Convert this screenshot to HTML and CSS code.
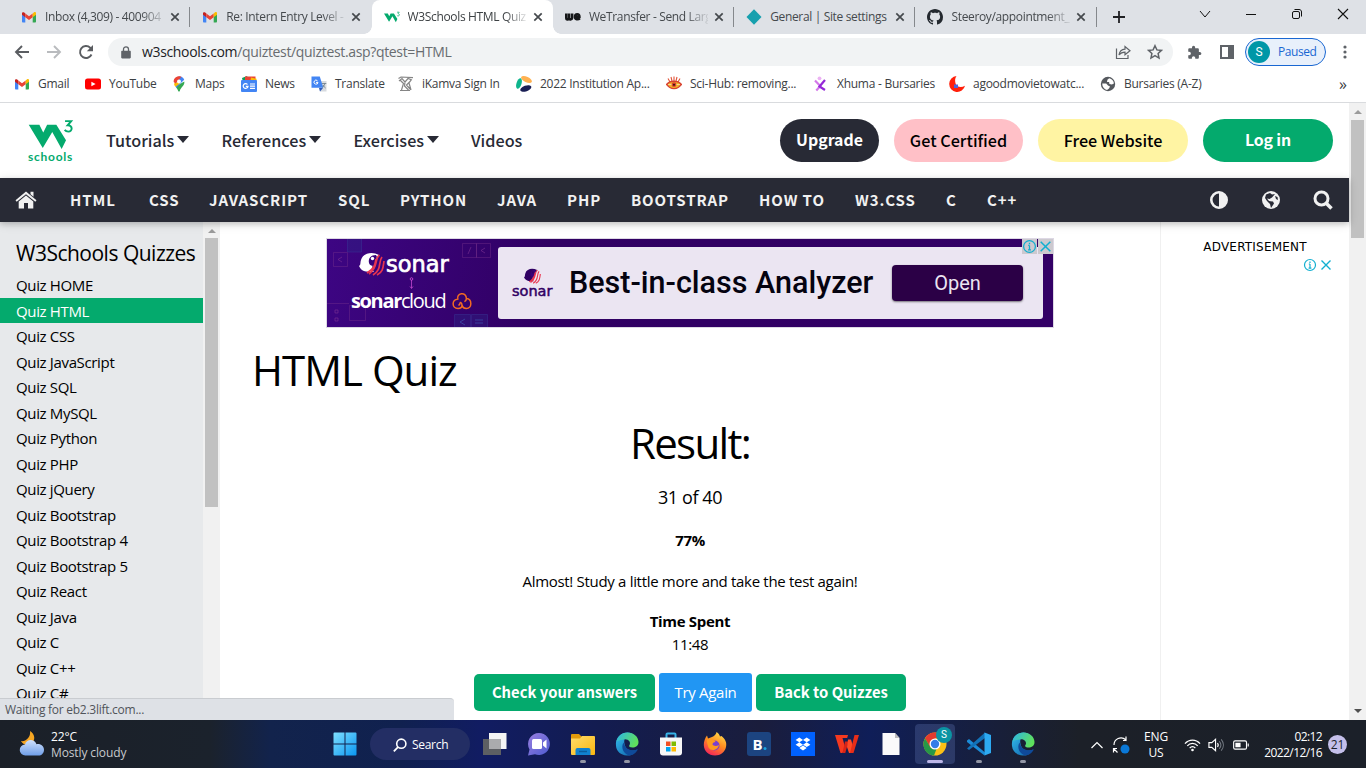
FILE: index.html
```html
<!DOCTYPE html>
<html lang="en">
<head>
<meta charset="utf-8">
<title>W3Schools HTML Quiz</title>
<link rel="stylesheet" href="styles.css">
</head>
<body>
<svg class="defs" aria-hidden="true">
  <defs>
    <linearGradient id="gEdge" x1="0" y1="0" x2="1" y2="1"><stop offset="0" stop-color="#35c1f1"/><stop offset="1" stop-color="#0c59a4"/></linearGradient>
    <linearGradient id="gEdgeTop" x1="0" y1="0" x2="1" y2=".4"><stop offset="0" stop-color="#2bb5ec"/><stop offset="1" stop-color="#5fe05c"/></linearGradient>
    <linearGradient id="gWin" x1="0" y1="0" x2="1" y2="1"><stop offset="0" stop-color="#7fe0ff"/><stop offset="1" stop-color="#0a96f0"/></linearGradient>
    <linearGradient id="gChat" x1="0" y1="0" x2="1" y2="1"><stop offset="0" stop-color="#9a7fe0"/><stop offset="1" stop-color="#4c5bd0"/></linearGradient>
    <linearGradient id="gFox" x1=".8" y1="0" x2=".3" y2="1"><stop offset="0" stop-color="#ffe14d"/><stop offset=".5" stop-color="#ff8a1f"/><stop offset="1" stop-color="#f5245a"/></linearGradient>
    <linearGradient id="gCloud" x1="0" y1="0" x2="0" y2="1"><stop offset="0" stop-color="#cfe0fb"/><stop offset="1" stop-color="#6f9ee8"/></linearGradient>
    <linearGradient id="gFolder" x1="0" y1="0" x2="1" y2="1"><stop offset="0" stop-color="#ffdc6b"/><stop offset="1" stop-color="#fbb60f"/></linearGradient>
  </defs>
  <symbol id="gmail" viewBox="0 0 16 16"><path fill="#4285f4" d="M1 5v7.6c0 .5.4 1 1 1h2.3V7z"/><path fill="#34a853" d="M11.7 7v6.6H14c.6 0 1-.5 1-1V5z"/><path fill="#c5221f" d="M1 4.2v1.6l3.300 2.500V4.500L3.200 3.500C2.300 2.800 1 3.300 1 4.200z"/><path fill="#ea4335" d="M4.300 4.400 8 7.200l3.700-2.800v3.900L8 11.100 4.300 8.300z"/><path fill="#fbbc04" d="M11.700 4.400v3.900L15 5.800V4.200c0-1-1.200-1.500-2.200-.7z"/></symbol>
  <symbol id="x" viewBox="0 0 10 10"><path d="M1.300 1.300l7.400 7.400M8.700 1.300 1.300 8.700" stroke="#45494d" stroke-width="1.700"/></symbol>
  <symbol id="edge" viewBox="0 0 24 24"><path fill="url(#gEdge)" d="M1 14C0 6 6 .5 12.500.5c3 0 5 1 6 2.500C13 1 8 6 9.500 12c1 6 7 8 13 5.500-3 5-7 6.500-11 6C6 23 1.500 19.500 1 14z"/><path fill="url(#gEdgeTop)" d="M1.300 10C2.500 3.500 7.500.5 12.500.5 19 .5 23.500 5 23.500 10c0 4-3 5.500-6 5.500-2.500 0-3.800-1-3.300-2 2.500-3-1-7-5.500-6C5 8 2.500 8.500 1.300 10z"/><path fill="#0f4a9a" d="M8.600 10.500c-3 4.500-.5 11 5.500 13 3.500-.3 6.400-2.200 8.400-5.600.2-.5-.2-.7-.6-.5-5 2.200-11.500.6-13.300-6.900z"/></symbol>
  <symbol id="adinfo" viewBox="0 0 14 14"><circle cx="7" cy="7" r="5.500" fill="none" stroke="#12afd0" stroke-width="1.200"/><path d="M7 6v4.300M7 3.500v1.400M5.800 6H7M5.600 10.200h2.800" stroke="#12afd0" stroke-width="1.200"/></symbol>
  <symbol id="adx" viewBox="0 0 14 14"><path d="m2.500 2.500 9 9m0-9-9 9" stroke="#12afd0" stroke-width="1.400"/></symbol>
  <symbol id="w3" viewBox="0 0 46 32"><path fill="#04aa6d" d="M0 6h11l4 8 4-8h9.500L38.500 22l-4.500 9-9.700-17.500L14.500 30z"/><path fill="none" stroke="#04aa6d" stroke-width="2" d="M37.500 2.200h6.300l-3.600 4.300c5.500-.2 5.200 6.500.7 6.500-1.600 0-3-.7-3.800-1.800"/></symbol>
  <symbol id="sonarmark" viewBox="0 0 26 24"><path fill="currentColor" d="M20 3C13-1 4 1 2 8c-1 3 0 5-2 6 1.500 3.500 4 5 7 5.500l8 .5c-2-2-2.500-6 0-10z"/><path class="mark-cut" d="M17 3c-5 0-8 3-7 8 1 3 4 4 6 1 2-2 0-4 2-7z"/><circle cx="13.500" cy="6.500" r="1.700" fill="currentColor"/><path d="M20.500 3C15 7 20 15 10 22m13-17c-4 5 0 13-9 18m11-14c-1 7-1 11-7 14m-1-16c-1 5-1 9-9 14" fill="none" stroke="#e8354f" stroke-width="1.700"/></symbol>
</svg>

<header class="chrome">
  <div class="tabs">
    <div class="tab sep"><svg class="fav"><use href="#gmail"/></svg><span class="tab-title">Inbox (4,309) - 400904</span><svg class="close"><use href="#x"/></svg></div>
    <div class="tab"><svg class="fav"><use href="#gmail"/></svg><span class="tab-title">Re: Intern Entry Level -</span><svg class="close"><use href="#x"/></svg></div>
    <div class="tab active"><svg class="fav"><use href="#w3"/></svg><span class="tab-title">W3Schools HTML Quiz</span><svg class="close"><use href="#x"/></svg></div>
    <div class="tab sep"><svg class="fav" viewBox="0 0 16 16"><path d="M1.300 4.500v4.800c0 1.300 1.600 1.500 2.400.4.600 1 3.400.9 3.400-.6V4.500" fill="none" stroke="#17181a" stroke-width="2.600"/><path d="M4 4.500v5" stroke="#17181a" stroke-width="2.600"/><path d="M10.300 8h4.200c0-3.600-4.600-3.600-4.600 0 0 2.800 3.200 2.800 5 1.500" fill="none" stroke="#17181a" stroke-width="2.400"/></svg><span class="tab-title">WeTransfer - Send Larg</span><svg class="close"><use href="#x"/></svg></div>
    <div class="tab sep"><svg class="fav" viewBox="0 0 16 16"><path fill="#17a0ae" d="m8 .3 7.500 7.700L8 15.700.5 8z"/></svg><span class="tab-title full">General | Site settings</span><svg class="close"><use href="#x"/></svg></div>
    <div class="tab sep"><svg class="fav" viewBox="0 0 16 16"><path fill="#24292f" d="M8 0C3.580 0 0 3.580 0 8c0 3.540 2.290 6.530 5.470 7.590.4.070.55-.17.55-.38 0-.19-.01-.82-.01-1.490-2.010.37-2.530-.49-2.690-.94-.09-.23-.48-.94-.82-1.130-.28-.15-.68-.52-.01-.53.63-.01 1.080.58 1.230.82.72 1.210 1.870.87 2.330.66.07-.52.280-.87.510-1.070-1.780-.2-3.640-.89-3.640-3.950 0-.87.310-1.590.820-2.150-.08-.2-.36-1.020.080-2.120 0 0 .67-.21 2.200.82.640-.18 1.320-.27 2-.27s1.360.09 2 .27c1.530-1.040 2.200-.82 2.200-.82.440 1.100.160 1.920.080 2.120.510.560.820 1.270.820 2.150 0 3.070-1.870 3.750-3.650 3.950.290.250.540.730.540 1.480 0 1.070-.01 1.930-.01 2.200 0 .210.150.460.550.380A8.010 8.010 0 0 0 16 8c0-4.420-3.580-8-8-8z"/></svg><span class="tab-title">Steeroy/appointment_</span><svg class="close"><use href="#x"/></svg></div>
    <svg class="newtab" viewBox="0 0 12 12"><path d="M6 0v12M0 6h12" stroke="#202124" stroke-width="1.800"/></svg>
    <div class="win">
      <svg viewBox="0 0 12 12"><path d="m1 3 5 6 5-6" fill="none" stroke="#111"/></svg>
      <svg viewBox="0 0 12 12"><path d="M1 6.500h10" stroke="#111"/></svg>
      <svg viewBox="0 0 12 12"><rect x="1.500" y="3.500" width="7" height="7" rx="1.500" fill="none" stroke="#111"/><path d="M3.500 1.500H8c1.600 0 2.500 1 2.500 2.500V8.500" fill="none" stroke="#111"/></svg>
      <svg viewBox="0 0 12 12"><path d="m1 1 10 10M11 1 1 11" stroke="#111" stroke-width="1.100"/></svg>
    </div>
  </div>

  <div class="toolbar">
    <svg class="tb" viewBox="0 0 16 16"><path d="M15 8H2m6-6L2 8l6 6" fill="none" stroke="#5a5d61" stroke-width="1.900"/></svg>
    <svg class="tb" viewBox="0 0 16 16"><path d="M1 8h13M8 2l6 6-6 6" fill="none" stroke="#b9bbbe" stroke-width="1.900"/></svg>
    <svg class="tb" viewBox="0 0 16 16"><path d="M13.500 10.500A6 6 0 1 1 12.200 3.700L14 5.500" fill="none" stroke="#5a5d61" stroke-width="1.900"/><path fill="#5a5d61" d="M15 1v6.200H8.800z"/></svg>
    <div class="omnibox">
      <svg class="lock" viewBox="0 0 10 13"><path fill="#5f6368" d="M1.200 4.700h7.600c.7 0 1 .4 1 1v5.600c0 .7-.4 1.100-1 1.100H1.200c-.7 0-1-.4-1-1.100V5.700c0-.6.300-1 1-1z"/><path d="M2.500 5V3.200c0-3.200 5-3.200 5 0V5" fill="none" stroke="#5f6368" stroke-width="1.300"/></svg>
      <span class="url">w3schools.com<i>/quiztest/quiztest.asp?qtest=HTML</i></span>
      <svg class="ob-ic share" viewBox="0 0 16 16"><path d="M1.500 4.500v10H13V11" fill="none" stroke="#5f6368" stroke-width="1.200"/><path d="M4 11c.6-4 2.800-5.600 6-5.800V2.500L15 6.700l-5 4V8.200C7.300 8.200 5.500 9 4 11z" fill="none" stroke="#5f6368" stroke-width="1.200"/></svg>
      <svg class="ob-ic" viewBox="0 0 16 16"><path d="m8 1.700 1.900 4.200 4.600.5-3.400 3.100.9 4.600-4-2.400-4 2.400.900-4.600L1.500 6.400l4.600-.5z" fill="none" stroke="#5f6368" stroke-width="1.500"/></svg>
    </div>
    <svg class="ext" viewBox="0 0 24 24"><path fill="#5f6368" d="M20.500 11H19V7c0-1.100-.9-2-2-2h-4V3.500a2.500 2.500 0 0 0-5 0V5H4c-1.100 0-2 .9-2 2v3.800h1.500a2.700 2.700 0 0 1 0 5.400H2V20c0 1.100.9 2 2 2h3.800v-1.500a2.700 2.700 0 0 1 5.400 0V22H17c1.100 0 2-.9 2-2v-4h1.500a2.500 2.500 0 0 0 0-5z"/></svg>
    <svg class="panel-ic" viewBox="0 0 14 14"><path fill="#5f6368" d="M0 0h14v14H0zm2 2v10h6V2z" fill-rule="evenodd"/></svg>
    <div class="profile"><b>S</b><span>Paused</span></div>
    <svg class="dots" viewBox="0 0 4 14"><g fill="#5f6368"><circle cx="2" cy="2" r="1.600"/><circle cx="2" cy="7" r="1.600"/><circle cx="2" cy="12" r="1.600"/></g></svg>
  </div>

  <div class="bookmarks">
    <a class="bm w71"><svg><use href="#gmail"/></svg>Gmail</a>
    <a class="bm w86"><svg viewBox="0 0 16 16"><rect y="2.500" width="16" height="11" rx="2.500" fill="#f00"/><path fill="#fff" d="m6.400 5.700 4.200 2.300-4.200 2.300z"/></svg>YouTube</a>
    <a class="bm w70"><svg viewBox="0 0 16 16"><path fill="#34a853" d="M13.300 5.500c.8 4-3.500 5.500-4.500 9.500-.2.700-1.400.7-1.600 0C6.700 13.200 5.500 12 4.500 10.500z"/><path fill="#4285f4" d="M8 .2c2.500 0 4.400 1.300 5.200 3.500L5 12l-.2-4z"/><path fill="#fbbc04" d="M3 7.500 9 5l-.5 2.700-4 3.100C3.500 9.700 3.100 8.700 3 7.500z"/><path fill="#ea4335" d="M4 2C6-.3 9-.2 10.500.8L4.500 7.600 2.700 6C2.600 4.400 3 3.100 4 2z"/><circle cx="8" cy="5.500" r="2" fill="#fff"/></svg>Maps</a>
    <a class="bm w70"><svg viewBox="0 0 16 16"><path fill="#0c9d58" d="m1 2 5-2 2 4-6 2z"/><path fill="#ea4335" d="M4 .5h10.500V6H4z"/><path fill="#fbbc04" d="m10 1.500 5.500 1.300V8H9z"/><rect y="4" width="16" height="12" rx="1" fill="#4285f4"/><path d="M6.500 8.500A2.400 2.400 0 1 0 7 10.300H4.800M9 8h5M9 10.200h5M9 12.400h5" fill="none" stroke="#fff" stroke-width="1.200"/></svg>News</a>
    <a class="bm w87"><svg viewBox="0 0 16 16"><path fill="#d7dbe0" d="M7 5h8.500v10.500H9z"/><path fill="#4285f4" d="M.500.500h8.300l3.500 11.300H.5z"/><path fill="#315bb8" d="M8 12h4l-3 3.500z"/><path d="M6.500 4.800A2 2 0 1 0 7 6.400H5" fill="none" stroke="#fff"/><path d="M11 7.500h4.300m-1.500 0c-.4 2-1.800 3.500-2.500 4M12 9c.8 1.500 1.700 2.500 2.600 3" fill="none" stroke="#687885" stroke-width=".8"/></svg>Translate</a>
    <a class="bm w118"><svg viewBox="0 0 16 16"><path d="M.500 2.500 3 1l12 .6M1 5l3-2.500 3 3.500 3-3.500 4 1.500M2.500 4.500l3 3L3.500 14M7 6 6.500 10l4 4m2-9L8.500 9l4 4.500M2 14.500h10M13 4l-2 3 2 7" fill="none" stroke="#858585" stroke-width="1.200"/></svg>iKamva Sign In</a>
    <a class="bm w150"><svg viewBox="0 0 16 16"><ellipse cx="10.500" cy="3.500" rx="5.800" ry="2.700" transform="rotate(25 10.500 3.500)" fill="#ffb150"/><ellipse cx="3" cy="7.500" rx="2.500" ry="5.400" transform="rotate(18 3 7.500)" fill="#0eb58d"/><ellipse cx="9.800" cy="12.500" rx="5.800" ry="2.800" transform="rotate(-20 9.800 12.500)" fill="#1a1f55"/></svg>2022 Institution Ap...</a>
    <a class="bm w147"><svg viewBox="0 0 16 16"><path d="M2 2.500 4 6M5 1l1 4M8 .5V5m3-4-1 4m4-2.500L12 6" stroke="#e2553a" stroke-width="1.100"/><path d="M0 9c4-5 12-5 16 0M1 8.500c3 5.500 11 5.500 14 0" fill="#f1b32a" stroke="#d8412f" stroke-width="1.400"/><circle cx="8" cy="8.700" r="2.400" fill="#d8412f"/><circle cx="8" cy="8.700" r="1" fill="#301010"/></svg>Sci-Hub: removing...</a>
    <a class="bm w136"><svg viewBox="0 0 16 16"><circle cx="6.500" cy="2.300" r="1.900" fill="#ecb3f3"/><path d="M2 4.500 7.300 10l-4 4.500" fill="none" stroke="#d478ea" stroke-width="2.200"/><path d="m12 4-5.500 6.500 5.500 3.500" fill="none" stroke="#9427d8" stroke-width="2.200"/></svg>Xhuma - Bursaries</a>
    <a class="bm w151"><svg viewBox="0 0 16 16"><path fill="#ff1f0a" d="M7.500 0A8 8 0 1 0 16 9.800c-4 2.400-8.500 1.400-9.500-2.500C5.800 4.500 6 2.300 7.500 0z"/><path fill="#4b62d8" d="M5 8.500h4V12H5z"/></svg>agoodmovietowatc...</a>
    <a class="bm wlast"><svg viewBox="0 0 16 16"><circle cx="8" cy="8" r="7.200" fill="#55595e"/><path fill="#fff" d="M9.200 2.200c2.800.4 4.700 2.900 4.700 5.400l-2 1-2.500-.6-.3-2L7 6l.4-2.300zM2.200 7.400l4 .2L8 9.500l2 .9-1 2.200-2 1.300c-2.700-.6-4.800-3-4.800-6.500z"/></svg>Bursaries (A-Z)</a>
    <span class="more">»</span>
  </div>
</header>

<section class="viewport">
  <div class="site">
    <div class="topbar">
      <div class="logo"><svg><use href="#w3"/></svg><span>schools</span></div>
      <a class="menu m1">Tutorials<i></i></a>
      <a class="menu m2">References<i></i></a>
      <a class="menu m3">Exercises<i></i></a>
      <a class="menu m4">Videos</a>
      <a class="pill dark">Upgrade</a>
      <a class="pill pink">Get Certified</a>
      <a class="pill yellow">Free Website</a>
      <a class="pill green">Log in</a>
    </div>
    <nav class="nav">
      <svg class="home" viewBox="0 0 22 18"><path fill="#f1f1f1" d="M11 .5 21.500 9.300l-1.200 1.500L11 3.200l-9.300 7.600L.5 9.300z"/><path fill="#f1f1f1" d="M15.500.8H18.500v5l-3-2.500z"/><path fill="#f1f1f1" d="m11 4.500 7.300 6V17.500H13v-5.500H9v5.500H3.700v-7z"/></svg>
      <a class="n79">HTML</a><a class="n60">CSS</a><a class="n129">JAVASCRIPT</a><a class="n62">SQL</a><a class="n97">PYTHON</a><a class="n70">JAVA</a><a class="n64">PHP</a><a class="n128">BOOTSTRAP</a><a class="n96">HOW TO</a><a class="n91">W3.CSS</a><a class="n41">C</a><a class="n30">C++</a>
      <div class="nav-icons">
        <svg viewBox="0 0 20 20"><circle cx="10" cy="10" r="7.700" fill="none" stroke="#f1f1f1" stroke-width="2.600"/><path fill="#f1f1f1" d="M10 2a8 8 0 0 1 0 16z"/></svg>
        <svg viewBox="0 0 20 20"><circle cx="10" cy="10" r="9" fill="#f1f1f1"/><path fill="#282a35" d="M5 4.500 9 3l2 1.500 3-.5-3 3.500L8.500 9 6 8.500l2 2.500 4 .5 1 2-3 4.500-1-4-3-3L4 8zM14 6l2.500 1 .5 3-2-1z"/></svg>
        <svg viewBox="0 0 20 20"><circle cx="8.500" cy="8.500" r="6.500" fill="none" stroke="#f1f1f1" stroke-width="3"/><path d="m13 13 5.500 5.500" stroke="#f1f1f1" stroke-width="3.500"/></svg>
      </div>
    </nav>
    <div class="columns">
      <aside class="side">
        <h2>W3Schools Quizzes</h2>
        <a>Quiz HOME</a><a class="on">Quiz HTML</a><a>Quiz CSS</a><a>Quiz JavaScript</a><a>Quiz SQL</a><a>Quiz MySQL</a><a>Quiz Python</a><a>Quiz PHP</a><a>Quiz jQuery</a><a>Quiz Bootstrap</a><a>Quiz Bootstrap 4</a><a>Quiz Bootstrap 5</a><a>Quiz React</a><a>Quiz Java</a><a>Quiz C</a><a>Quiz C++</a><a>Quiz C#</a>
      </aside>
      <div class="sb side-sb"><i class="up"></i><i class="thumb"></i></div>
      <main class="main">
        <div class="ad">
          <div class="ad-brand">
            <svg class="blocks" viewBox="0 0 170 88"><g fill="#2a2a86" fill-opacity=".35" stroke="#3a3f9c" stroke-opacity=".4"><path d="M20.500-1h14v14h-14zM127.500 75.500h16V89h-16zM144.500 75.500h16V89h-16z"/></g><g fill="none" stroke="#79328c" stroke-opacity=".4"><path d="M6.500 13.500h14v14h-14zM135.500 4.500h14v14h-14zM149.500 4.500h14v14h-14zM22.500 66.500h16v15h-16zM0 64.500h22"/></g><path d="m15 18-4 2.500 4 2.500M158 9l-4 2.500 4 2.500M144 8l-3 7M8 71h3v3H8zM8 79h3v3H8z" fill="none" stroke="#7b3292" stroke-opacity=".6"/><path d="M148 81h8m-8 3h8m-18-4-5 3 5 3" fill="none" stroke="#3d4aa5" stroke-opacity=".8"/></svg>
            <div class="brand-row"><svg class="mark"><use href="#sonarmark"/></svg><span>sonar</span></div>
            <svg class="link" viewBox="0 0 5 12"><circle cx="2.500" cy="2" r="1.300" fill="none" stroke="#d250d8" stroke-width=".8"/><path d="M2.500 3v8M1 9.500l1.500 2L4 9.500" fill="none" stroke="#d250d8" stroke-width=".7"/></svg>
            <div class="cloud-row"><span><b>sonar</b>cloud</span><svg viewBox="0 0 20 18"><path d="M6 7.800C3.400 1 14.500-1 14.400 6.600c6 .4 5.800 9.900 0 9.900-2.100 0-3.800-1-4.400-3M6.500 13.500c1.300-1 1.600-1.600 1.800-3.200M6 7.300c-6.500-.3-6.500 9 0 9.200 2.400 0 4-1.500 4-3.500 0-1.300-.5-2.200-1.700-3M14.400 6.600c0 1.500-.6 2.400-2 3" fill="none" stroke="#f36b22" stroke-width="1.500"/></svg></div>
          </div>
          <div class="ad-panel">
            <div class="mini"><svg><use href="#sonarmark"/></svg><span>sonar</span></div>
            <strong>Best-in-class Analyzer</strong>
            <a class="open">Open</a>
          </div>
          <div class="ad-opts"><svg><use href="#adinfo"/></svg><svg><use href="#adx"/></svg></div>
        </div>
        <h1>HTML Quiz</h1>
        <h1 class="result">Result:</h1>
        <p class="score">31 of 40</p>
        <p class="pct">77%</p>
        <p class="msg">Almost! Study a little more and take the test again!</p>
        <p class="time"><b>Time Spent</b><br>11:48</p>
        <div class="btns"><a class="btn check">Check your answers</a><a class="btn again">Try Again</a><a class="btn back">Back to Quizzes</a></div>
      </main>
      <aside class="right"><div class="adv">ADVERTISEMENT</div><div class="ri"><svg><use href="#adinfo"/></svg><svg><use href="#adx"/></svg></div></aside>
    </div>
  </div>
  <div class="sb page-sb"><i class="up"></i><i class="thumb"></i><i class="down"></i></div>
  <div class="status">Waiting for eb2.3lift.com...</div>
</section>

<footer class="taskbar">
  <div class="weather">
    <svg viewBox="0 0 26 26"><path fill="#f6a623" d="M11 0c5 3 6 9 1 13-3 2-8 1-10-3 5 1 10-4 9-10z"/><path fill="url(#gCloud)" d="M6.500 24.500a5.500 5.500 0 0 1-.5-11c1-5 9-6.500 11.500-.3 4.300-.7 7.500 2 7.500 5.500s-2.500 5.800-5.500 5.800z"/></svg>
    <div>22°C<br><span>Mostly cloudy</span></div>
  </div>
  <svg class="start" viewBox="0 0 24 24"><path fill="url(#gWin)" d="M.500 1.500q0-1 1-1h10v11H.5zM12.500.500h10q1 0 1 1v10h-11zM.500 12.500h11v11h-10q-1 0-1-1zM12.500 12.500h11v10q0 1-1 1h-10z"/></svg>
  <div class="search"><svg viewBox="0 0 14 14"><circle cx="8.300" cy="5.700" r="4.600" fill="none" stroke="#fff" stroke-width="1.600"/><path d="M5 9.200.8 13.300" stroke="#fff" stroke-width="1.800"/></svg>Search</div>
  <div class="apps">
    <a><svg viewBox="0 0 24 24"><path fill="#f4f4f4" d="M6 1h17.500v16H6z"/><path fill="#5d5f63" d="M0 7h18v16H0z"/><path fill="#aaabad" d="M6 7h12v10H6z"/></svg></a>
    <a><svg viewBox="0 0 24 24"><path fill="url(#gChat)" d="M12 1a11 11 0 1 1-4 21.300L1 23.500l1.500-6A11 11 0 0 1 12 1z"/><rect x="5" y="7" width="10" height="10" rx="1.500" fill="#fff"/><path fill="#fff" d="m16 10.500 3.500-3v9l-3.500-3z"/></svg></a>
    <a class="run"><svg viewBox="0 0 24 24"><path fill="#e29a0b" d="M0 3q0-1 1-1h7l2.500 2.500H22v4H0z"/><path fill="url(#gFolder)" d="M0 6.500h9L11 4h12q1 0 1 1v17q0 1-1 1H1q-1 0-1-1z"/><path fill="#1081d0" d="M4.500 23v-5q0-2 2-2h11q2 0 2 2v5z"/><path d="M8 19.500h8" stroke="#0a5c9d" stroke-width="1.500"/></svg></a>
    <a class="run"><svg><use href="#edge"/></svg></a>
    <a><svg viewBox="0 0 24 24"><path d="M7.500 6V2.500q0-1 1-1h7q1 0 1 1V6" fill="none" stroke="#37b3e8" stroke-width="2"/><path fill="#f7f7f7" d="M1 5.500h22v15q0 3-3 3H4q-3 0-3-3z"/><path fill="#f25022" d="M7 9.500h4.500V14H7z"/><path fill="#7fba00" d="M12.500 9.500H17V14h-4.500z"/><path fill="#00a4ef" d="M7 15h4.500v4.500H7z"/><path fill="#ffb900" d="M12.500 15H17v4.500h-4.500z"/></svg></a>
    <a><svg viewBox="0 0 24 24"><path fill="url(#gFox)" d="M13.500 0c2 1 3 3 3.500 4.500l1.500-.5c4 3 5.500 7 4.500 11-1.200 5.300-5.500 8.500-11 8.500C5.500 23.500 1 19 .800 13 .700 9.500 2 6 4 3.500l1 3 4-1.500c2-.8 4.500-3 4.500-5z"/><circle cx="11.500" cy="13.500" r="5" fill="#7a3fd0"/><path fill="#ff9a1f" d="M4 7.500c4-1.500 7-.5 8.500 2.500-2 0-3 1-3 2.500 1.500 2 4.500 1.500 6.500.5-1 5-8 7-10.500 2.500C4.500 12.500 3.500 10 4 7.500z"/></svg></a>
    <a><svg viewBox="0 0 24 24"><rect width="24" height="24" rx="3" fill="#1c4480"/><text class="bk" x="5.500" y="17.500">B</text><circle cx="18" cy="16.500" r="1.500" fill="#1ba3e0"/></svg></a>
    <a><svg viewBox="0 0 24 24"><path fill="#0061fe" d="M0 0h24v24H0z"/><path fill="#fff" d="m8.300 5.500 3.700 2.400-3.700 2.400-3.700-2.400zm7.400 0 3.700 2.400-3.700 2.400L12 7.900zM8.300 10.300l3.700 2.400-3.700 2.400-3.700-2.400zm7.400 0 3.700 2.400-3.700 2.400-3.700-2.400zM12 13.600l3.700 2.400-3.700 2.400L8.300 16z"/></svg></a>
    <a><svg viewBox="0 0 24 24"><path fill="#f5391f" d="M0 3h13l-.8 3H7.500L10 15l-2.500 6H5.500z"/><path fill="#d92315" d="M10 9.500h3.500L10.300 21H7.500z"/><path fill="#ff4a26" d="M13 7.500h3L18.500 16l-1.500 5h-3l-2-6z"/><path fill="#e82d18" d="M19.500 3H24l-5.500 18H15z"/></svg></a>
    <a><svg viewBox="0 0 24 24"><path fill="#fafafa" d="M3.500 1H16l4.500 5v17h-17z"/><path fill="#bcbcbc" d="M16 1v5h4.500z"/></svg></a>
    <a class="cur"><svg viewBox="0 0 24 24"><circle cx="12" cy="12" r="11.500" fill="#fbc116"/><path fill="#e33b2e" d="M2 6.300a11.500 11.500 0 0 1 20 0H12l-5 9z"/><path fill="#279847" d="M2 6.300 7.500 15.500 13.500 17l-2.500 6.500C2 23-2 13.500 2 6.300z"/><circle cx="12" cy="12" r="5.500" fill="#fff"/><circle cx="12" cy="12" r="4.200" fill="#357de8"/></svg><b class="who">S</b></a>
    <a class="run"><svg viewBox="0 0 24 24"><path fill="#1b8bd8" d="M0 8.500 2 7l16 13.500-.5 3L0 10z"/><path fill="#1272b8" d="M0 16.500 18 .5v5.500L2 18z"/><path fill="#2daaf2" d="M17.500.500 24 3v18l-6.500 2.500z"/></svg></a>
    <a class="run"><svg><use href="#edge"/></svg></a>
  </div>
  <div class="tray">
    <svg class="t-up" viewBox="0 0 12 12"><path d="M.500 9 6 3.500 11.500 9" fill="none" stroke="#fff" stroke-width="1.200"/></svg>
    <svg class="t-sync" viewBox="0 0 18 18"><path d="M2 9C2 3 9-.5 14 4V.5M14.500 4.500H11M1.500 12v4.500M1.500 12.500H5M2 13l3.500 3.500" fill="none" stroke="#fff" stroke-width="1.200"/><circle cx="13" cy="13" r="4.500" fill="#0a78d7"/></svg>
    <div class="lang">ENG<br>US</div>
    <svg class="t-wifi" viewBox="0 0 18 14"><path d="M1 5.500c4.500-5 11.500-5 16 0M3.500 8c3-3.500 8-3.500 11 0M6 10.300c1.700-2 4.300-2 6 0" fill="none" stroke="#fff" stroke-width="1.300"/><circle cx="9" cy="12.300" r="1.400" fill="#fff"/></svg>
    <svg class="t-vol" viewBox="0 0 18 14"><path d="M1 4.500h3L8 1v12L4 9.500H1z" fill="none" stroke="#fff" stroke-width="1.200"/><path d="M10 5c1 1.200 1 2.800 0 4" fill="none" stroke="#fff" stroke-width="1.200"/><path d="M12 3c2 2.400 2 5.600 0 8m2-10c3 3.600 3 8.400 0 12" fill="none" stroke="#777d86" stroke-width="1.100"/></svg>
    <svg class="t-bat" viewBox="0 0 18 12"><rect x=".700" y="1.700" width="13.600" height="8.600" rx="1.500" fill="none" stroke="#fff" stroke-width="1.200"/><path fill="#fff" d="M2.500 3.500H8v5H2.500zM15.500 4.500h1.200v3h-1.200z"/></svg>
    <div class="clock">02:12<br>2022/12/16</div>
    <div class="badge">21</div>
  </div>
</footer>
</body>
</html>
```
FILE: styles.css
```css
* { box-sizing: border-box; }
html, body { margin: 0; height: 100%; overflow: hidden; }
body { width: 1366px; height: 768px; display: flex; flex-direction: column; background: #fff; color: #000; font: 12px/16px "Open Sans", "Noto Sans", sans-serif; }
a { color: inherit; text-decoration: none; }
svg { display: block; flex: none; }
.defs { position: absolute; width: 0; height: 0; }

/* browser frame */
.chrome { flex: none; height: 103px; border-bottom: 1px solid #d9dbde; }
.tabs { display: flex; height: 34px; background: #dee1e6; padding-left: 9px; align-items: center; }
.tab { width: 181.300px; height: 34px; padding: 0 10px 0 12px; display: flex; align-items: center; flex: none; position: relative; color: #45494d; }
.tab.sep::after { content: ""; position: absolute; right: 0; top: 7px; width: 1px; height: 20px; background: #85888c; }
.tab.active { background: #fff; border-radius: 8px 8px 0 0; color: #3c4043; }
.tab.active::before, .tab.active::after { content: ""; position: absolute; bottom: 0; width: 8px; height: 8px; }
.tab.active::before { left: -8px; background: radial-gradient(circle at 0 0, transparent 7.500px, #fff 8px); }
.tab.active::after { right: -8px; background: radial-gradient(circle at 100% 0, transparent 7.500px, #fff 8px); }
.fav { width: 16px; height: 16px; }
.tab-title { width: 119px; margin-left: 8px; flex: none; white-space: nowrap; overflow: hidden; letter-spacing: -.35px; -webkit-mask-image: linear-gradient(90deg, #000 96px, transparent 122px); mask-image: linear-gradient(90deg, #000 96px, transparent 122px); }
.tab-title.full { -webkit-mask-image: none; mask-image: none; }
.close { width: 10px; height: 10px; margin-left: 6px; }
.newtab { width: 12px; height: 12px; margin-left: 16px; }
.win { margin-left: auto; width: 167px; display: flex; justify-content: space-between; padding: 0 17px 6px 0; }
.win svg { width: 12px; height: 12px; }
.toolbar { display: flex; align-items: center; height: 36px; padding-left: 14px; }
.tb { width: 16px; height: 16px; margin-right: 16px; }
.omnibox { width: 1065px; height: 28px; margin-left: -2px; border-radius: 14px; background: #f1f3f4; display: flex; align-items: center; padding: 0 10px 0 13px; }
.lock { width: 10px; height: 13px; }
.url { margin-left: 11px; font-size: 14px; line-height: 20px; letter-spacing: -.34px; color: #202124; }
.url i { font-style: normal; color: #686c70; }
.ob-ic { width: 16px; height: 16px; }
.share { margin: 0 16px 0 auto; }
.ext { width: 15px; height: 15px; margin-left: 14px; }
.panel-ic { width: 14px; height: 14px; margin-left: 18px; }
.profile { width: 81px; height: 28px; margin-left: 11px; border: 1px solid #1967d2; border-radius: 14px; background: #e8f0fb; display: flex; align-items: center; padding-left: 2px; color: #1967d2; }
.profile b { width: 22px; height: 22px; border-radius: 50%; background: #0097a7; color: #fff; text-align: center; font: 12px/22px Roboto, sans-serif; margin-right: 8px; }
.profile span { letter-spacing: -.45px; }
.dots { width: 4px; height: 14px; margin-left: 17px; }
.bookmarks { display: flex; align-items: center; height: 28px; padding-left: 14px; color: #3c4043; }
.bm { display: flex; align-items: center; flex: none; gap: 8px; white-space: nowrap; letter-spacing: -.26px; }
.bm svg { width: 16px; height: 16px; }
.w71 { width: 71px; } .w86 { width: 86px; } .w70 { width: 70px; } .w87 { width: 87px; }
.w118 { width: 118px; } .w150 { width: 150px; } .w147 { width: 147px; } .w136 { width: 136px; } .w151 { width: 151px; }
.more { margin-left: auto; margin-right: 19px; padding-bottom: 1px; font-size: 16px; }

/* page viewport */
.viewport { flex: none; height: 617px; display: flex; position: relative; overflow: hidden; }
.site { width: 1349px; display: flex; flex-direction: column; }
.topbar { height: 75px; flex: none; display: flex; align-items: center; padding-left: 28px; font: 500 16.200px/24px "Noto Sans CJK SC", "Open Sans", sans-serif; color: #282a35; }
.logo { width: 78px; flex: none; height: 75px; padding-top: 16px; color: #04aa6d; font: 700 12px/14px Lato, sans-serif; letter-spacing: .75px; }
.logo svg { width: 46px; height: 31px; }
.menu { display: flex; align-items: center; flex: none; gap: 3px; padding-bottom: 2px; }
.menu i { border: 6px solid transparent; border-top: 7px solid #282a35; border-bottom: 0; margin-top: 0; }
.m1 { width: 115.500px; } .m2 { width: 132px; } .m3 { width: 117.500px; } .m4 { width: 309px; }
.pill { height: 43px; border-radius: 22px; display: flex; align-items: center; justify-content: center; margin-right: 15px; padding-bottom: 1px; color: #000; flex: none; }
.dark { width: 99px; background: #282a35; color: #fff; font-weight: 700; font-size: 15.900px; }
.pink { width: 129px; background: #ffc0c7; }
.yellow { width: 150px; background: #fff4a3; }
.green { width: 130px; background: #04aa6d; color: #fff; font-weight: 700; font-size: 15.900px; letter-spacing: -.2px; margin-right: 0; }
.nav { height: 44px; flex: none; display: flex; align-items: center; background: #282a35; color: #f1f1f1; padding-left: 15px; font: 700 15px/22px "Noto Sans CJK SC", "Open Sans", sans-serif; letter-spacing: .9px; box-shadow: 0 2px 5px rgba(0,0,0,.16), 0 2px 10px rgba(0,0,0,.12); position: relative; z-index: 1; white-space: nowrap; }
.nav a { flex: none; }
.home { width: 22px; height: 18px; margin-right: 33px; }
.n79 { width: 79px; } .n60 { width: 60px; } .n129 { width: 129px; } .n62 { width: 62px; } .n97 { width: 97px; } .n70 { width: 70px; }
.n64 { width: 64px; } .n128 { width: 128px; } .n96 { width: 96px; } .n91 { width: 91px; } .n41 { width: 41px; } .n30 { width: 30px; }
.nav-icons { margin-left: auto; display: flex; gap: 32px; padding: 0 16.500px 1px 0; }
.nav-icons svg { width: 20px; height: 20px; }
.columns { display: flex; height: 498px; overflow: hidden; }
.side { width: 203px; flex: none; background: #e7e9eb; padding-top: 16px; }
.side h2 { margin: 0 0 4px; padding-left: 16px; font-size: 21px; line-height: 30px; font-weight: 400; letter-spacing: -.5px; white-space: nowrap; }
.side a { display: block; height: 25.500px; padding-left: 16px; font-size: 15px; line-height: 26px; letter-spacing: -.35px; }
.side .on { background: #04aa6d; color: #fff; }
.sb { width: 17px; background: #f1f1f1; flex: none; display: flex; flex-direction: column; align-items: center; }
.sb i { display: block; flex: none; }
.up { border: 4px solid transparent; border-bottom-color: #9b9b9b; border-top: 0; }
.side-sb .up { margin: 7px 0 5px; }
.side-sb .thumb { width: 13px; height: 269px; background: #c1c1c1; }
.page-sb .up { margin: 7px 0 6px; }
.page-sb .thumb { width: 13px; height: 118px; background: #c1c1c1; }
.down { border: 4px solid transparent; border-top-color: #505050; border-bottom: 0; margin: auto 0 7px; }
.main { width: 940px; flex: none; padding-top: 16px; text-align: center; }
.main p { margin: 0; font-size: 15px; line-height: 23px; letter-spacing: -.31px; }
.main h1 { margin: 14px 0 0; padding-left: 32px; text-align: left; font-size: 42px; line-height: 56px; font-weight: 400; letter-spacing: -.960px; font-family: "Open Sans", sans-serif; }
.main .result { margin: 17px 0 14px; padding: 0; text-align: center; letter-spacing: -1.700px; }
.main .score { font-size: 18px; line-height: 24px; margin-bottom: 20px; letter-spacing: -.4px; }
.main .pct { margin-bottom: 18px; font-weight: 700; }
.main .msg { margin-bottom: 17px; }
.btns { display: flex; gap: 4px; justify-content: center; align-items: center; margin-top: 17px; }
.btn { height: 37px; border-radius: 5px; background: #04aa6d; color: #fff; font: 700 14.800px/36px "Noto Sans CJK SC", "Open Sans", sans-serif; }
.check { width: 181px; } .back { width: 150px; }
.again { width: 93px; height: 39px; background: #2196f3; border-radius: 3px; font: 15px/39px "Open Sans", sans-serif; letter-spacing: -.3px; }

/* banner */
.ad { width: 728px; height: 90px; margin: 0 auto; border: 1px solid #ddd8e4; background: linear-gradient(100deg, #3d0583 0, #300063 30%, #330066 100%); display: flex; position: relative; }
.ad-brand { width: 171px; position: relative; padding-top: 13px; color: #fff; text-align: left; }
.blocks { position: absolute; left: 0; top: 0; width: 170px; height: 88px; }
.brand-row { display: flex; align-items: center; height: 24px; padding-left: 32px; position: relative; font: 22.500px/22px "DejaVu Sans", sans-serif; -webkit-text-stroke: .7px #fff; }
.mark { width: 26px; height: 24px; margin-right: 1px; color: #fff; }
.mark-cut { fill: #38017a; }
.mini .mark-cut { fill: #ebe5f2; }
.link { width: 5px; height: 12px; margin: 1px 0 0 82px; }
.cloud-row { display: flex; align-items: center; height: 22px; margin-top: 1px; padding-left: 24px; gap: 7px; font-size: 20px; line-height: 22px; letter-spacing: -1.350px; position: relative; }
.cloud-row svg { width: 20px; height: 18px; }
.ad-panel { width: 545px; height: 72px; margin-top: 8px; border-radius: 3px; background: #ebe5f2; display: flex; align-items: center; padding-left: 14px; }
.mini { width: 43px; margin-right: 14px; color: #300063; text-align: left; font: 14.500px/14px "DejaVu Sans", sans-serif; -webkit-text-stroke: .5px #300063; }
.mini svg { width: 17px; height: 16px; margin: -1px 0 0 12px; }
.ad-panel strong { width: 323px; font: 500 30.500px/40px Roboto, sans-serif; color: #050310; text-align: left; white-space: nowrap; }
.open { width: 131px; height: 36px; border-radius: 4px; background: #2b0046; color: #ebe5f2; font: 20px/36px Roboto, sans-serif; box-shadow: 0 1px 2px rgba(0,0,0,.5); }
.ad-opts { position: absolute; right: 0; top: 0; display: flex; gap: 1px; }
.ad-opts svg { width: 15px; height: 15px; background: #ccc9cf; }
.right { flex: 1; border-left: 1px solid #f0f0f0; text-align: center; }
.adv { margin-top: 17px; font: 12px/17px "DejaVu Sans", sans-serif; letter-spacing: .2px; }
.ri { display: flex; justify-content: flex-end; gap: 2px; padding: 2px 16px 0 0; }
.ri svg { width: 14px; height: 14px; }
.status { position: absolute; left: 0; bottom: 0; width: 454px; height: 22px; background: #dee1e6; border-top: 1px solid #c9ccd0; border-radius: 0 4px 0 0; z-index: 2; padding-left: 5px; color: #50545a; line-height: 22px; letter-spacing: -.26px; }

/* taskbar */
.taskbar { flex: none; height: 48px; display: flex; align-items: center; color: #fff; background: linear-gradient(90deg, #1b2028 0, #1b222c 210px, #12234c 270px, #10214f 400px, #111c62 480px, #131c50 600px, #1a1d3c 760px, #0f1e58 870px, #181f39 1000px, #1c2028 1080px, #1b2029 100%); }
.weather { width: 313px; padding: 1px 0 0 19px; display: flex; gap: 6px; align-items: center; letter-spacing: -.12px; }
.weather svg { width: 26px; height: 26px; margin-top: -2px; }
.weather span { color: #c8cacd; }
.start { width: 24px; height: 24px; margin-left: 19.500px; }
.search { width: 100px; height: 32px; border-radius: 16px; background: #232e64; margin-left: 13.500px; display: flex; align-items: center; gap: 5px; padding: 1px 0 0 23px; letter-spacing: -.3px; }
.search svg { width: 14px; height: 14px; }
.apps { display: flex; margin-left: 3px; }
.apps a { width: 44px; height: 48px; padding: 12px 10px; position: relative; }
.apps svg { width: 24px; height: 24px; }
.apps .run::after, .cur::after { content: ""; position: absolute; left: 19px; bottom: 5px; width: 6px; height: 3px; border-radius: 2px; background: #9296a5; }
.apps .cur { width: 40px; height: 40px; margin: 4px 2px; padding: 8px; border-radius: 4px; background: rgba(90,110,170,.35); }
.apps .cur::after { left: 12px; bottom: 1px; width: 16px; background: #bdb7e8; }
.who { position: absolute; right: 3px; top: 3px; width: 16px; height: 16px; border-radius: 50%; background: #0b94a3; font: 10px/16px Roboto, sans-serif; text-align: center; }
.bk { font: 700 15px "Open Sans", sans-serif; fill: #fff; }
.tray { margin-left: auto; display: flex; align-items: center; padding: 1px 19px 0 0; letter-spacing: -.2px; }
.t-up { width: 12px; height: 12px; margin-right: 9px; }
.t-sync { width: 18px; height: 18px; }
.lang { width: 28px; margin: 0 14px 0 12px; text-align: center; }
.t-wifi { width: 17px; height: 14px; margin-right: 7px; }
.t-vol { width: 17px; height: 14px; margin-right: 8px; }
.t-bat { width: 17px; height: 12px; }
.clock { width: 72px; text-align: right; letter-spacing: -.6px; }
.badge { width: 19px; height: 19px; border-radius: 50%; margin-left: 6px; background: #c4bfea; color: #1b1f28; text-align: center; line-height: 19px; }
```
